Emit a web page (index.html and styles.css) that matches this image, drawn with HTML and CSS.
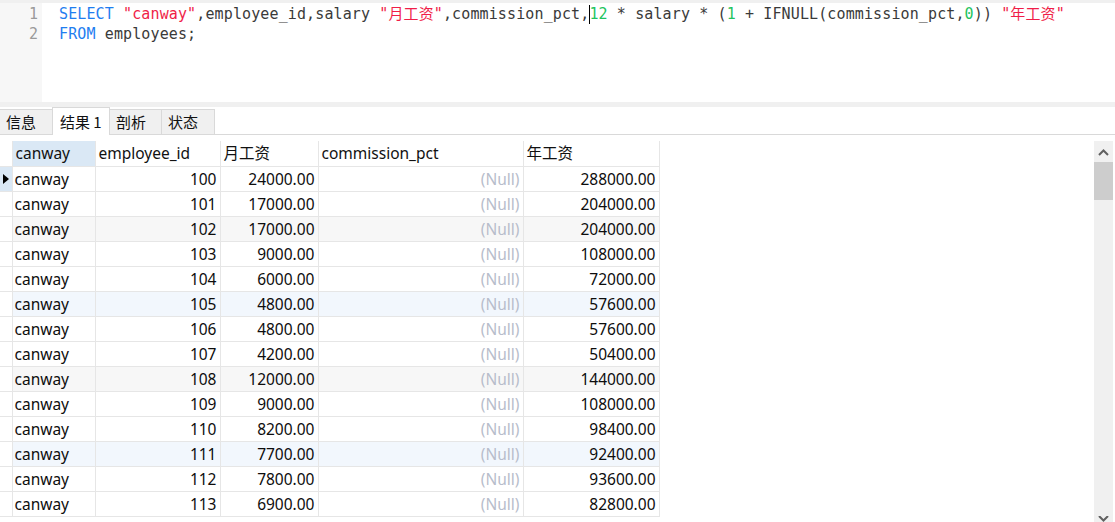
FILE: index.html
```html
<!DOCTYPE html>
<html>
<head>
<meta charset="utf-8">
<link rel="stylesheet" href="styles.css">
</head>
<body>
<div class="app">
  <div class="editor">
    <div class="gutter">
      <div class="ln">1</div>
      <div class="ln">2</div>
    </div>
    <div class="code">
      <div class="line"><span class="kw">SELECT</span> <span class="str">"canway"</span>,employee_id,salary <span class="str">"月工资"</span>,commission_pct,<span class="caret"></span><span class="num">12</span> * salary * (<span class="num">1</span> + IFNULL(commission_pct,<span class="num">0</span>)) <span class="str">"年工资"</span></div>
      <div class="line"><span class="kw">FROM</span> employees;</div>
    </div>
  </div>
  <div class="band"></div>
  <div class="tabs">
    <div class="tab t1">信息</div>
    <div class="tab active t2">结果 1</div>
    <div class="tab t3">剖析</div>
    <div class="tab t4">状态</div>
  </div>
  <div class="results">
    <div class="grid-wrap">
      <table class="grid">
        <colgroup>
          <col class="c0"><col class="c1"><col class="c2"><col class="c3"><col class="c4"><col class="c5">
        </colgroup>
        <thead>
          <tr><th class="ind"></th><th class="sel">canway</th><th>employee_id</th><th>月工资</th><th>commission_pct</th><th>年工资</th></tr>
        </thead>
        <tbody>
          <tr><td class="ind cur"><span class="tri"></span></td><td>canway</td><td class="r">100</td><td class="r">24000.00</td><td class="r null">(Null)</td><td class="r">288000.00</td></tr>
          <tr><td class="ind"></td><td>canway</td><td class="r">101</td><td class="r">17000.00</td><td class="r null">(Null)</td><td class="r">204000.00</td></tr>
          <tr class="g"><td class="ind"></td><td>canway</td><td class="r">102</td><td class="r">17000.00</td><td class="r null">(Null)</td><td class="r">204000.00</td></tr>
          <tr><td class="ind"></td><td>canway</td><td class="r">103</td><td class="r">9000.00</td><td class="r null">(Null)</td><td class="r">108000.00</td></tr>
          <tr><td class="ind"></td><td>canway</td><td class="r">104</td><td class="r">6000.00</td><td class="r null">(Null)</td><td class="r">72000.00</td></tr>
          <tr class="b"><td class="ind"></td><td>canway</td><td class="r">105</td><td class="r">4800.00</td><td class="r null">(Null)</td><td class="r">57600.00</td></tr>
          <tr><td class="ind"></td><td>canway</td><td class="r">106</td><td class="r">4800.00</td><td class="r null">(Null)</td><td class="r">57600.00</td></tr>
          <tr><td class="ind"></td><td>canway</td><td class="r">107</td><td class="r">4200.00</td><td class="r null">(Null)</td><td class="r">50400.00</td></tr>
          <tr class="g"><td class="ind"></td><td>canway</td><td class="r">108</td><td class="r">12000.00</td><td class="r null">(Null)</td><td class="r">144000.00</td></tr>
          <tr><td class="ind"></td><td>canway</td><td class="r">109</td><td class="r">9000.00</td><td class="r null">(Null)</td><td class="r">108000.00</td></tr>
          <tr><td class="ind"></td><td>canway</td><td class="r">110</td><td class="r">8200.00</td><td class="r null">(Null)</td><td class="r">98400.00</td></tr>
          <tr class="b"><td class="ind"></td><td>canway</td><td class="r">111</td><td class="r">7700.00</td><td class="r null">(Null)</td><td class="r">92400.00</td></tr>
          <tr><td class="ind"></td><td>canway</td><td class="r">112</td><td class="r">7800.00</td><td class="r null">(Null)</td><td class="r">93600.00</td></tr>
          <tr><td class="ind"></td><td>canway</td><td class="r">113</td><td class="r">6900.00</td><td class="r null">(Null)</td><td class="r">82800.00</td></tr>
        </tbody>
      </table>
    </div>
    <div class="scrollbar">
      <svg class="arrow" width="19" height="20" viewBox="0 0 19 20"><path d="M5 14 L9.5 9.5 L14 14" fill="none" stroke="#606060" stroke-width="2"/></svg>
      <div class="thumb"></div>
      <div class="track"></div>
      <svg class="arrow down" width="19" height="6" viewBox="0 0 19 6"><path d="M5 0 L9.5 4.5 L14 0" fill="none" stroke="#606060" stroke-width="2"/></svg>
    </div>
  </div>
</div>
</body>
</html>
```
FILE: styles.css
```css
* { box-sizing: border-box; }
html, body { margin: 0; padding: 0; background: #fff; }
.app {
  width: 1115px;
  height: 522px;
  overflow: hidden;
  display: flex;
  flex-direction: column;
  font-family: "Noto Sans", "Noto Sans CJK SC", sans-serif;
}
.editor {
  height: 102px;
  flex: none;
  display: flex;
  border-top: 3px solid #f0f0f0;
  background: #fff;
}
.gutter {
  width: 42px;
  background: #f7f7f7;
  padding-top: 1px;
  padding-right: 4px;
  font-family: "DejaVu Sans Mono", "Noto Sans CJK SC", monospace;
  font-size: 15px;
  line-height: 20px;
  color: #9a9a9a;
  text-align: right;
}
.code {
  flex: 1;
  padding-top: 1px;
  padding-left: 17px;
  font-family: "DejaVu Sans Mono", "Noto Sans CJK SC", monospace;
  font-size: 15px;
  line-height: 20px;
  letter-spacing: 0.12px;
  color: #3a3a3a;
}
.line { white-space: pre; height: 20px; }
.kw { color: #1f7ef0; }
.str { color: #f01e48; }
.num { color: #1fc45f; }
.caret {
  display: inline-block;
  width: 0;
  height: 19px;
  border-left: 1px solid #000;
  vertical-align: -5px;
  margin-right: -1px;
}
.band { height: 5px; flex: none; background: #f0f0f0; }
.tabs {
  height: 28px;
  flex: none;
  display: flex;
  align-items: flex-end;
  border-bottom: 1px solid #d9d9d9;
  background: #fff;
  font-family: "Noto Sans CJK SC", sans-serif;
  font-size: 15px;
  color: #111;
}
.tab {
  height: 25px;
  background: #f0f0f0;
  border: 1px solid #d9d9d9;
  border-bottom: none;
  border-left: none;
  line-height: 23px;
  padding-left: 6px;
  white-space: nowrap;
  overflow: hidden;
}
.tab.active {
  height: 28px;
  margin-bottom: -1px;
  background: #fff;
  border-left: 1px solid #d9d9d9;
  line-height: 27px;
  padding-left: 7px;
}
.t1 { width: 53px; }
.t2 { width: 58px; margin-left: -1px; }
.t3 { width: 52px; }
.t4 { width: 53px; }
.results {
  flex: 1;
  display: flex;
  padding-top: 6px;
}
.grid-wrap { flex: 1; overflow: hidden; }
.grid {
  border-collapse: collapse;
  table-layout: fixed;
  width: 659px;
  font-size: 15.5px;
  color: #0d0d0d;
}
.c0 { width: 12px; }
.c1 { width: 83px; }
.c2 { width: 125px; }
.c3 { width: 98px; }
.c4 { width: 205px; }
.c5 { width: 136px; }
.grid th, .grid td {
  height: 25px;
  padding: 0 3px 0 2px;
  border-right: 1px solid #e6e6e6;
  border-bottom: 1px solid #e6e6e6;
  white-space: nowrap;
  overflow: hidden;
  line-height: 24px;
}
.grid th {
  font-weight: normal;
  text-align: left;
  color: #111;
  font-size: 15.5px;
  padding-left: 3px;
}
.grid th.sel { background: #dae8f5; }
.grid .ind { padding: 0; }
.grid td.cur { background: #dae8f5; }
.tri {
  display: block;
  width: 0;
  height: 0;
  margin-left: 3px;
  border-top: 5px solid transparent;
  border-bottom: 5px solid transparent;
  border-left: 6px solid #000;
}
.grid td.r { text-align: right; }
.grid td.null { color: #b7bdcb; }
.grid tr.g td:not(.ind) { background: #f7f7f7; }
.grid tr.b td:not(.ind) { background: #f2f7fd; }
.scrollbar {
  width: 19px;
  margin-right: 2px;
  background: #f0f0f0;
  display: flex;
  flex-direction: column;
}
.arrow { display: block; flex: none; }
.thumb { height: 38px; background: #cdcdcd; flex: none; margin-top: 1px; }
.track { flex: 1; }
```
